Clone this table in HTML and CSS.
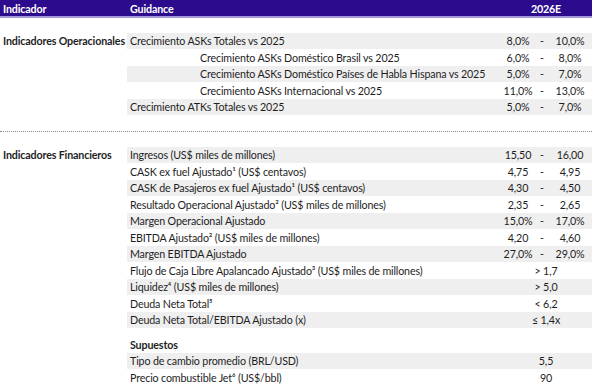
FILE: index.html
```html
<!DOCTYPE html>
<html lang="es">
<head>
    <meta charset="UTF-8">
    <title>Guidance 2026</title>
    <link rel="stylesheet" href="styles.css">
</head>
<body>
    <div class="head">
        <div class="lab">Indicador</div>
        <div class="desc">Guidance</div>
        <div class="year">2026E</div>
    </div>

    <div class="section ops">
        <div class="row shade">
            <div class="lab">Indicadores Operacionales</div>
            <div class="line"><span>Crecimiento ASKs Totales vs 2025</span><span class="lo">8,0%</span><span class="dash">-</span><span class="hi">10,0%</span></div>
        </div>
        <div class="row">
            <div class="lab"></div>
            <div class="line sub"><span>Crecimiento ASKs Doméstico Brasil vs 2025</span><span class="lo">6,0%</span><span class="dash">-</span><span class="hi">8,0%</span></div>
        </div>
        <div class="row shade">
            <div class="lab"></div>
            <div class="line sub"><span>Crecimiento ASKs Doméstico Países de Habla Hispana vs 2025</span><span class="lo">5,0%</span><span class="dash">-</span><span class="hi">7,0%</span></div>
        </div>
        <div class="row">
            <div class="lab"></div>
            <div class="line sub"><span>Crecimiento ASKs Internacional vs 2025</span><span class="lo">11,0%</span><span class="dash">-</span><span class="hi">13,0%</span></div>
        </div>
        <div class="row shade">
            <div class="lab"></div>
            <div class="line"><span>Crecimiento ATKs Totales vs 2025</span><span class="lo">5,0%</span><span class="dash">-</span><span class="hi">7,0%</span></div>
        </div>
    </div>

    <div class="divider"></div>

    <div class="section fin">
        <div class="row shade">
            <div class="lab">Indicadores Financieros</div>
            <div class="line"><span>Ingresos (US$ miles de millones)</span><span class="lo">15,50</span><span class="dash">-</span><span class="hi">16,00</span></div>
        </div>
        <div class="row">
            <div class="lab"></div>
            <div class="line"><span>CASK ex fuel Ajustado¹ (US$ centavos)</span><span class="lo">4,75</span><span class="dash">-</span><span class="hi">4,95</span></div>
        </div>
        <div class="row shade">
            <div class="lab"></div>
            <div class="line"><span>CASK de Pasajeros ex fuel Ajustado¹ (US$ centavos)</span><span class="lo">4,30</span><span class="dash">-</span><span class="hi">4,50</span></div>
        </div>
        <div class="row">
            <div class="lab"></div>
            <div class="line"><span>Resultado Operacional Ajustado² (US$ miles de millones)</span><span class="lo">2,35</span><span class="dash">-</span><span class="hi">2,65</span></div>
        </div>
        <div class="row shade">
            <div class="lab"></div>
            <div class="line"><span>Margen Operacional Ajustado</span><span class="lo">15,0%</span><span class="dash">-</span><span class="hi">17,0%</span></div>
        </div>
        <div class="row">
            <div class="lab"></div>
            <div class="line"><span>EBITDA Ajustado² (US$ miles de millones)</span><span class="lo">4,20</span><span class="dash">-</span><span class="hi">4,60</span></div>
        </div>
        <div class="row shade">
            <div class="lab"></div>
            <div class="line"><span>Margen EBITDA Ajustado</span><span class="lo">27,0%</span><span class="dash">-</span><span class="hi">29,0%</span></div>
        </div>
        <div class="row">
            <div class="lab"></div>
            <div class="line"><span>Flujo de Caja Libre Apalancado Ajustado³ (US$ miles de millones)</span><span class="one">&gt; 1,7</span></div>
        </div>
        <div class="row shade">
            <div class="lab"></div>
            <div class="line"><span>Liquidez⁴ (US$ miles de millones)</span><span class="one">&gt; 5,0</span></div>
        </div>
        <div class="row">
            <div class="lab"></div>
            <div class="line"><span>Deuda Neta Total⁵</span><span class="one">&lt; 6,2</span></div>
        </div>
        <div class="row shade">
            <div class="lab"></div>
            <div class="line"><span>Deuda Neta Total/EBITDA Ajustado (x)</span><span class="one">≤ 1,4x</span></div>
        </div>
    </div>

    <div class="section assumptions">
        <div class="row">
            <div class="lab"></div>
            <div class="line"><span class="bold">Supuestos</span></div>
        </div>
        <div class="row shade">
            <div class="lab"></div>
            <div class="line"><span>Tipo de cambio promedio (BRL/USD)</span><span class="one">5,5</span></div>
        </div>
        <div class="row">
            <div class="lab"></div>
            <div class="line"><span>Precio combustible Jet⁶ (US$/bbl)</span><span class="one">90</span></div>
        </div>
    </div>
</body>
</html>
```

FILE: styles.css
```css
body {
    margin: 0;
    font-family: Lato, "Open Sans", sans-serif;
    font-size: 10.7px;
    letter-spacing: -0.15px;
    color: #1e1e1e;
    background-color: #fff;
}
.head {
    display: flex;
    align-items: center;
    height: 16px;
    background-color: #2c0b8c;
    border-bottom: 2px solid #a596dc;
    color: #fff;
    font-weight: bold;
}
.lab {
    width: 127px;
    flex-shrink: 0;
    padding-left: 3px;
    box-sizing: border-box;
    font-weight: bold;
    white-space: nowrap;
}
.head .desc {
    flex: 1;
    padding-left: 3px;
}
.head .year {
    width: 92px;
    text-align: center;
}
.section.ops {
    margin-top: 14.5px;
}
.row {
    display: flex;
    align-items: center;
    height: 16.5px;
}
.line {
    flex: 1;
    height: 100%;
    display: grid;
    grid-template-columns: 1fr 36px 12px 44px;
    align-items: center;
    padding-left: 3px;
    white-space: nowrap;
}
.line.sub {
    padding-left: 73px;
}
.row.shade .line {
    background-color: #efefef;
}
.lo, .dash, .hi, .one {
    text-align: center;
}
.one {
    grid-column: 2 / 5;
}
.bold {
    font-weight: bold;
}
.divider {
    margin: 15.5px 0 15px;
    border-top: 1px dotted #8a8a8a;
}
.section.assumptions {
    margin-top: 8px;
}
```
